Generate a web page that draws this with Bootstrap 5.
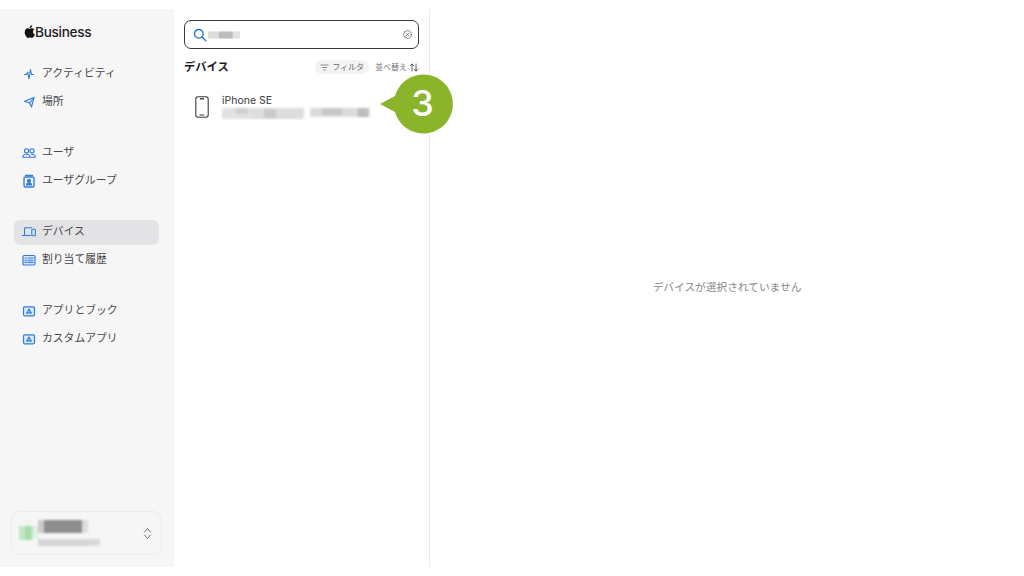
<!DOCTYPE html>
<html lang="ja">
<head>
<meta charset="utf-8">
<title>Apple Business</title>
<link href="https://cdn.jsdelivr.net/npm/bootstrap@5.3.0/dist/css/bootstrap.min.css" rel="stylesheet">
<style>
html,body{height:100%;background:#fff;overflow:hidden}
body{font-family:Inter,"Noto Sans CJK JP",sans-serif;color:#3a3a3c}
.app-shell{height:558px;margin-top:9px;position:relative}
.side-pane{width:174px;background:#f6f6f6;padding:0 12px 12px 14px;flex:none}
.brand-row{height:52.5px;padding:12px 0 0 10px;font-size:13.6px;font-weight:500;color:#1d1d1f;letter-spacing:-.3px;line-height:22px}
.brand-row svg{width:11px;height:13px;margin-top:-3px}
.nav-set{margin-bottom:24px}
.nav-line{height:25.5px;margin-bottom:2px;border-radius:6px;padding-left:8px;font-size:10.8px;color:#48484a;display:flex;align-items:center;gap:6px;width:145px}
.nav-line.is-on{background:#e3e3e5}
.nav-line svg{width:14px;height:14px;flex:none;fill:none;stroke:#2f7ddb;stroke-width:1.1;stroke-linecap:round;stroke-linejoin:round}
.org-box{width:151px;height:44px;margin-left:-3px;border:1px solid #ececec;border-radius:9px;padding:0 9px 0 7px;position:relative}
.org-blur{width:90px;height:34px;filter:blur(.8px)}
.list-pane{width:256px;border-right:1px solid #ececec;padding:11px 10px 0 10px;flex:none}
.search-box{height:29px;border:1px solid #3a3a3c;border-radius:7px;padding:0 6px 0 8px;gap:1px}
.search-blur{width:32px;height:8px;filter:blur(.6px)}
.pane-head{height:24px;margin-top:6px}
.pane-title{font-size:11.3px;font-weight:600;color:#1d1d1f}
.chip-soft{background:#f3f3f3;border-radius:8px;height:14px;padding:0 5px;font-size:8px;color:#6e6e73;gap:3px;line-height:14px}
.sort-lbl{font-size:8px;color:#6e6e73;gap:2px;margin-left:6px}
.device-row{margin-top:13px;padding-left:11px;gap:13px;height:30px}
.device-name{font-size:10.5px;line-height:13px;color:#3a3a3c;margin-top:-1px}
.device-blur{width:152px;height:13px;filter:blur(.9px);display:block}
.detail-pane{font-size:10.7px;color:#86868b;padding-top:1px}
.callout-mark{position:absolute;left:379px;top:65px;width:76px;height:60px}
.callout-num{position:absolute;left:393px;top:65px;width:59px;height:60px;text-align:center;font-family:Inter,sans-serif;font-weight:500;font-size:36px;line-height:59px;color:#fff}
</style>
</head>
<body>
<div class="app-shell d-flex">
  <aside class="side-pane d-flex flex-column">
    <div class="brand-row"><svg viewBox="0 0 14 17" fill="#111"><path d="M11.6 9c0-2 1.6-2.9 1.7-3-1-1.400-2.400-1.600-2.900-1.600-1.200-.1-2.400.7-3 .7-.6 0-1.600-.7-2.600-.7C3.400 4.400 2.100 5.200 1.400 6.400-.1 9 1 12.800 2.400 14.800c.7 1 1.500 2.100 2.600 2.100 1 0 1.400-.7 2.700-.7 1.200 0 1.600.7 2.700.6 1.100 0 1.800-1 2.500-2 .8-1.100 1.100-2.200 1.100-2.300 0 0-2.400-.9-2.400-3.500zM9.600 3c.6-.7 1-1.700.9-2.700-.9 0-1.900.6-2.500 1.300-.5.6-1 1.600-.9 2.600 1 .1 1.900-.5 2.500-1.200z"/></svg>Business</div>
    <div class="nav-set">
      <div class="nav-line"><svg viewBox="0 0 14 14"><path d="M2.500 7.500h2L5.700 5 7 12 8.500 2.500l1 5h2"/></svg>アクティビティ</div>
      <div class="nav-line"><svg viewBox="0 0 14 14"><path d="M2.500 6.300 12 2.500 9.500 12 7.600 7.800z"/><path d="M7.600 7.800 12 2.500"/></svg>場所</div>
    </div>
    <div class="nav-set">
      <div class="nav-line"><svg viewBox="0 0 14 14"><circle cx="4.500" cy="4.800" r="2.100"/><circle cx="10" cy="4.800" r="2.100"/><path d="M.8 11.200c0-2 1.600-3 3.700-3s3.500 1 3.500 3zM9.500 8.200c2.200 0 3.800 1 3.800 3H8"/></svg>ユーザ</div>
      <div class="nav-line"><svg viewBox="0 0 14 14"><rect x="2" y="3" width="10" height="10" rx="1.500" stroke-width="1.400"/><path d="M3.500 1.500h7" stroke-width="1.400"/><circle cx="7" cy="6.800" r="1.500" fill="#2f7ddb"/><path d="M4.500 11c0-1.500 1-2.200 2.500-2.200s2.500.7 2.500 2.200z" fill="#2f7ddb"/></svg>ユーザグループ</div>
    </div>
    <div class="nav-set">
      <div class="nav-line is-on"><svg viewBox="0 0 14 14"><path d="M2.500 9.500V3.500c0-.5.300-.8.800-.8h6.500"/><path d="M.5 10.500h8"/><rect x="9.800" y="4.200" width="3.600" height="6.600" rx=".8"/></svg>デバイス</div>
      <div class="nav-line"><svg viewBox="0 0 14 14"><rect x="1" y="2.500" width="12" height="9.500" rx="1.200" stroke-width="1.200" fill="#d9e8fa"/><path d="M3 5h1.500M3 7.200h1.500M3 9.400h1.500M6 5h5M6 7.200h5M6 9.400h5"/></svg>割り当て履歴</div>
    </div>
    <div class="nav-set">
      <div class="nav-line"><svg viewBox="0 0 14 14"><rect x="1.500" y="2.800" width="11" height="9" rx="1.200" stroke-width="1.200" fill="#d9e8fa"/><path d="M7 5 5 9.300M7 5l2 4.300M4.500 8.800h5" stroke-width="1.200"/></svg>アプリとブック</div>
      <div class="nav-line"><svg viewBox="0 0 14 14"><rect x="1.500" y="2.800" width="11" height="9" rx="1.200" stroke-width="1.200" fill="#d9e8fa"/><path d="M7 5 5 9.300M7 5l2 4.300M4.500 8.800h5" stroke-width="1.200"/></svg>カスタムアプリ</div>
    </div>
    <div class="org-box d-flex align-items-center justify-content-between mt-auto">
      <svg class="org-blur" viewBox="0 0 90 34" aria-hidden="true">
        <rect x="0" y="10" width="14" height="14" fill="#c2e6c4"/><rect x="6" y="10" width="6" height="14" fill="#a8dcaa"/><rect x="6" y="4" width="6" height="6" fill="#eaf6ea"/><rect x="14" y="10" width="6" height="12" fill="#dff2df"/>
        <rect x="19" y="4" width="6" height="13" fill="#cbcbcb"/><rect x="25" y="4" width="38" height="13" fill="#8e8e8e"/><rect x="63" y="4" width="6" height="13" fill="#dedede"/>
        <rect x="19" y="23" width="50" height="7" fill="#d4d4d4"/><rect x="69" y="23" width="12" height="7" fill="#dadada"/>
      </svg>
      <svg width="9" height="13" viewBox="0 0 9 13" fill="none" stroke="#6e6e73" stroke-width="1" stroke-linecap="round" stroke-linejoin="round"><path d="M1.500 5 4.500 1.500 7.500 5M1.500 8l3 3.500 3-3.500"/></svg>
    </div>
  </aside>
  <section class="list-pane">
    <div class="search-box d-flex align-items-center">
      <svg width="14" height="14" viewBox="0 0 14 14" fill="none" stroke="#1f6fd1" stroke-width="1.300" stroke-linecap="round"><circle cx="5.800" cy="5.800" r="4.300"/><path d="M9 9l3.800 3.800"/></svg>
      <svg class="search-blur" viewBox="0 0 36 8" aria-hidden="true"><rect width="12" height="8" fill="#dcdcdc"/><rect x="12" width="16" height="8" fill="#bdbdbd"/><rect x="28" width="8" height="8" fill="#e2e2e2"/></svg>
      <svg class="ms-auto" width="9" height="9" viewBox="0 0 9 9" fill="none" stroke="#6e6e73" stroke-width=".8" stroke-linecap="round"><circle cx="4.500" cy="4.500" r="3.900"/><path d="M3 3l3 3M6 3 3 6"/></svg>
    </div>
    <div class="pane-head d-flex align-items-center">
      <span class="pane-title">デバイス</span>
      <span class="chip-soft d-inline-flex align-items-center ms-auto"><svg width="9" height="7" viewBox="0 0 9 7" stroke="#6e6e73" stroke-width=".8"><path d="M.5 1h8M2 3.500h5M3.500 6h2"/></svg>フィルタ</span>
      <span class="sort-lbl d-inline-flex align-items-center">並べ替え<svg width="10" height="9" viewBox="0 0 10 9" fill="none" stroke="#3a3a3c" stroke-width=".8" stroke-linecap="round" stroke-linejoin="round"><path d="M3 8V1M1 3l2-2 2 2M7 1v7M5 6l2 2 2-2"/></svg></span>
    </div>
    <div class="device-row d-flex align-items-center">
      <svg width="14" height="22" viewBox="0 0 14 22" fill="none" stroke="#3a3a3c" stroke-width="1.100"><rect x=".8" y=".8" width="12.400" height="20.400" rx="2.200"/><path d="M5 2.800h4" stroke-width="1.400"/><path d="M5.200 19h3.600" stroke-linecap="round"/></svg>
      <div>
        <div class="device-name">iPhone SE</div>
        <svg class="device-blur" viewBox="0 0 152 13" aria-hidden="true">
          <rect y="1" width="28" height="11" fill="#e2e2e2"/><rect x="14" y="1" width="12" height="6" fill="#cfcfcf"/><rect x="28" y="1" width="54" height="11" fill="#dedede"/><rect x="42" y="2" width="12" height="9" fill="#cacaca"/><rect x="88" y="1" width="60" height="9" fill="#dcdcdc"/><rect x="100" y="1" width="20" height="7" fill="#c8c8c8"/><rect x="136" y="1" width="10" height="9" fill="#bdbdbd"/>
        </svg>
      </div>
    </div>
  </section>
  <main class="detail-pane flex-grow-1 d-flex align-items-center justify-content-center">デバイスが選択されていません</main>
  <svg class="callout-mark" viewBox="0 0 76 60" aria-hidden="true"><path d="M1 30 16 22A29.500 29.500 0 1 1 16 38z" fill="#8cb42b"/></svg>
  <div class="callout-num">3</div>
</div>
<script src="https://cdn.jsdelivr.net/npm/bootstrap@5.3.0/dist/js/bootstrap.bundle.min.js"></script>
</body>
</html>
